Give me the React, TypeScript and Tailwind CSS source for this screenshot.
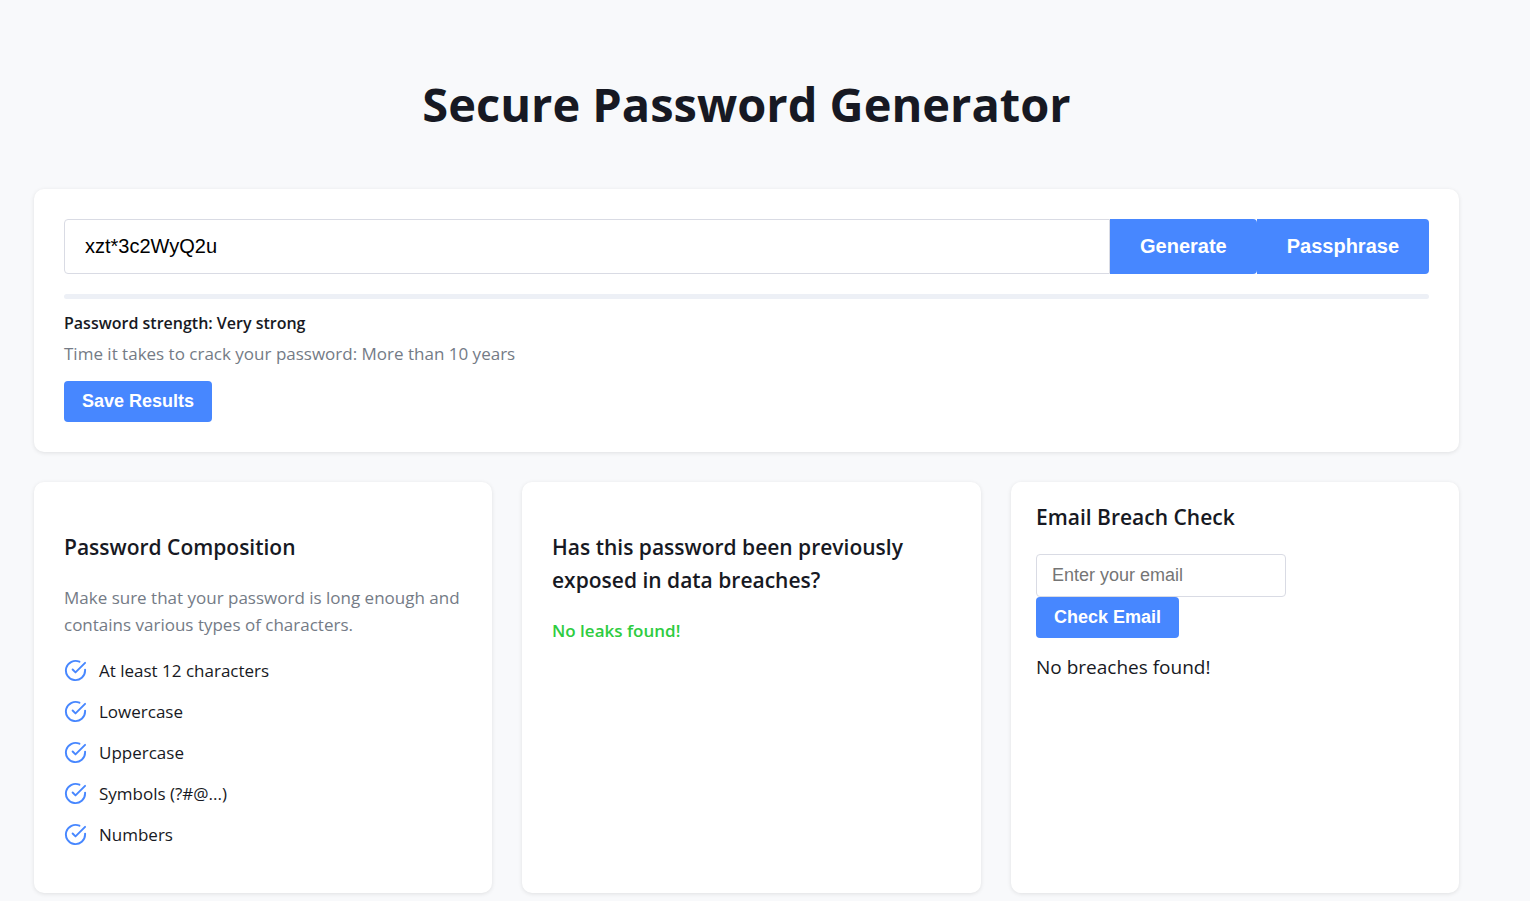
import { useState } from "react";

const requirements = [
  "At least 12 characters",
  "Lowercase",
  "Uppercase",
  "Symbols (?#@...)",
  "Numbers",
];

const card = "rounded-[10px] bg-white shadow-[0_1px_4px_rgba(0,0,0,0.1)]";
const button = "bg-[#4787ff] font-['Liberation_Sans',sans-serif] font-bold text-white";
const largeButton = "rounded-r-[4px] px-[30px] pb-[2px] text-[20px]";
const smallButton = "h-[41px] rounded-[4px] px-[18px] text-[18px]";
const heading = "text-[21px] leading-[33px] font-semibold";

function CheckIcon() {
  return (
    <svg
      className="size-[23px] shrink-0"
      viewBox="0 0 24 24"
      fill="none"
      stroke="#4787ff"
      strokeWidth="2"
      strokeLinecap="round"
      strokeLinejoin="round"
      aria-hidden="true"
    >
      <path d="M22 11.08V12a10 10 0 1 1-5.93-9.14" />
      <path d="m9 11 3 3L22 4" />
    </svg>
  );
}

export default function App() {
  const [password, setPassword] = useState("xzt*3c2WyQ2u");
  const [email, setEmail] = useState("");

  return (
    <div className="min-h-screen bg-[#f8f9fb] pt-[69px] pr-[71px] pb-2 pl-[34px] font-['Open_Sans','Noto_Sans',sans-serif] text-[#171923]">
      <h1 className="text-center text-[47px] leading-[70px] font-bold">
        Secure Password Generator
      </h1>
      <main className="mt-[50px] flex flex-col gap-[30px]">
        <section className={`${card} p-[30px]`}>
          <div className="flex h-[55px]">
            <input
              aria-label="Password"
              className="min-w-0 flex-1 rounded-l-[4px] border border-[#d9dbe4] bg-white px-5 pb-[2px] font-['Liberation_Sans',sans-serif] text-[20px] text-black outline-none"
              value={password}
              onChange={(e) => setPassword(e.target.value)}
            />
            <button className={`${button} ${largeButton}`}>Generate</button>
            <button className={`${button} ${largeButton}`}>Passphrase</button>
          </div>
          <div className="mt-5 h-[5px] rounded-[3px] bg-[#edf0f6]" />
          <p className="mt-[10px] text-[16px] leading-7 font-semibold">Password strength: Very strong</p>
          <p className="mt-[3px] text-[17px] leading-7 text-[#747b86]">
            Time it takes to crack your password: More than 10 years
          </p>
          <button className={`${button} ${smallButton} mt-[13px]`}>Save Results</button>
        </section>
        <div className="grid min-h-[411px] grid-cols-[458fr_459fr_448fr] gap-[30px]">
          <section className={`${card} px-[30px] pt-[49px] pb-[30px]`}>
            <h2 className={heading}>Password Composition</h2>
            <p className="mt-5 text-[17px] leading-[27px] text-[#747b86]">
              Make sure that your password is long enough and contains various types of characters.
            </p>
            <ul className="mt-[19px] flex flex-col gap-[14px]">
              {requirements.map((item) => (
                <li key={item} className="flex items-center gap-3 text-[17px] leading-[27px]">
                  <CheckIcon />
                  {item}
                </li>
              ))}
            </ul>
          </section>
          <section className={`${card} px-[30px] pt-[49px] pb-[30px]`}>
            <h2 className={heading}>
              Has this password been previously exposed in data breaches?
            </h2>
            <p className="mt-5 text-[17px] leading-[27px] font-semibold text-[#2ecc40]">No leaks found!</p>
          </section>
          <section className={`${card} px-[25px] pt-[19px]`}>
            <h2 className={heading}>Email Breach Check</h2>
            <div className="mt-5 flex flex-col items-start">
              <input
                type="email"
                aria-label="Email"
                className="h-[43px] w-[250px] rounded-[4px] border border-[#d9dbe4] bg-white px-[15px] font-['Liberation_Sans',sans-serif] text-[18px] outline-none placeholder:text-[#757575]"
                placeholder="Enter your email"
                value={email}
                onChange={(e) => setEmail(e.target.value)}
              />
              <button className={`${button} ${smallButton}`}>Check Email</button>
            </div>
            <p className="mt-[14px] text-[19px] leading-[30px]">No breaches found!</p>
          </section>
        </div>
      </main>
    </div>
  );
}
